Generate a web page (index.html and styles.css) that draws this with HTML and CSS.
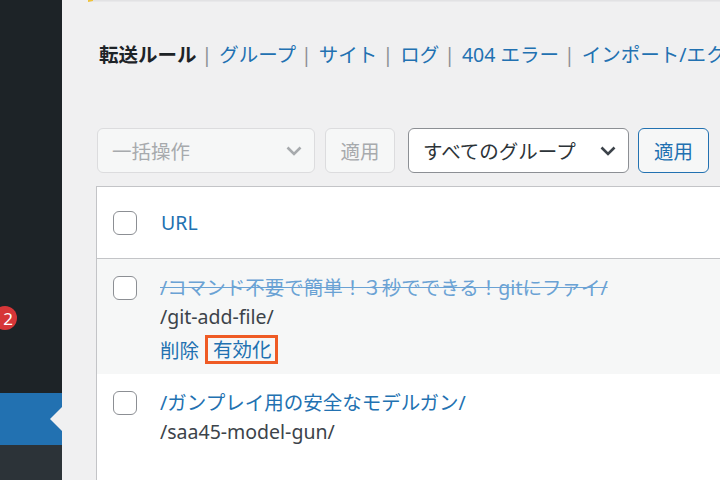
FILE: index.html
```html
<!DOCTYPE html>
<html lang="ja">
<head>
<meta charset="utf-8">
<title>Redirection</title>
<link rel="stylesheet" href="styles.css">
</head>
<body>
<div class="layout">
  <nav class="sidebar">
    <div class="badge-item"><span class="badge">2</span></div>
    <div class="current"><span class="pointer"></span></div>
    <div class="submenu"></div>
  </nav>
  <main class="content">
    <div class="notice"></div>
    <p class="subsubsub"><strong class="here">転送ルール</strong><span class="sep">|</span><a>グループ</a><span class="sep">|</span><a>サイト</a><span class="sep">|</span><a>ログ</a><span class="sep">|</span><a>404 エラー</a><span class="sep">|</span><a>インポート/エクスポート</a><span class="sep">|</span><a>オプション</a></p>
    <div class="tablenav">
      <div class="select bulk"><span>一括操作</span><svg class="chev" width="16" height="10" viewBox="0 0 16 10"><polyline points="1.5,1.5 8,8 14.5,1.5" fill="none" stroke="currentColor" stroke-width="2.6"/></svg></div>
      <div class="button disabled">適用</div>
      <div class="select group"><span>すべてのグループ</span><svg class="chev" width="16" height="10" viewBox="0 0 16 10"><polyline points="1.5,1.5 8,8 14.5,1.5" fill="none" stroke="currentColor" stroke-width="2.6"/></svg></div>
      <div class="button primary">適用</div>
    </div>
    <div class="list">
      <div class="row head">
        <div class="cell-check"><span class="cb"></span></div>
        <div class="cell-title"><a class="col-link">URL</a></div>
      </div>
      <div class="row item alt">
        <div class="cell-check"><span class="cb"></span></div>
        <div class="cell-title">
          <div class="line"><a class="title struck">/コマンド不要で簡単！３秒でできる！gitにファイ/</a></div>
          <div class="line slug">/git-add-file/</div>
          <div class="actions"><a>削除</a><a class="hl">有効化</a></div>
        </div>
      </div>
      <div class="row item">
        <div class="cell-check"><span class="cb"></span></div>
        <div class="cell-title">
          <div class="line"><a class="title">/ガンプレイ用の安全なモデルガン/</a></div>
          <div class="line slug">/saa45-model-gun/</div>
        </div>
      </div>
    </div>
  </main>
</div>
</body>
</html>
```

FILE: styles.css
```css
* { box-sizing: border-box; }
html, body { margin: 0; padding: 0; }
body {
  width: 720px;
  height: 480px;
  overflow: hidden;
  background: #f0f0f1;
  font-family: "Noto Sans", "Noto Sans CJK JP", sans-serif;
  font-size: 19.5px;
  color: #3c434a;
}
a { color: #2271b1; text-decoration: none; }

.layout { display: flex; height: 480px; }

/* sidebar */
.sidebar {
  width: 62px;
  flex: none;
  background: #1d2327;
  display: flex;
  flex-direction: column;
}
.badge-item { margin-top: 306px; height: 24px; }
.badge {
  display: flex;
  align-items: center;
  justify-content: center;
  width: 24px;
  height: 24px;
  margin-left: -7px;
  border-radius: 50%;
  background: #d63638;
  color: #fff;
  font-size: 17px;
  line-height: 1;
  padding-left: 6px;
}
.current {
  margin-top: 63px;
  height: 52px;
  background: #2271b1;
  display: flex;
  justify-content: flex-end;
  align-items: center;
}
.pointer {
  width: 0;
  height: 0;
  border-right: 12px solid #f0f0f1;
  border-top: 12.5px solid transparent;
  border-bottom: 12.5px solid transparent;
}
.submenu { flex: 1; background: #2c3338; }

/* content */
.content {
  flex: 1;
  min-width: 0;
  padding-left: 34px;
  display: flex;
  flex-direction: column;
  align-items: flex-start;
}
.notice {
  margin-left: -8px;
  width: 700px;
  height: 2px;
  flex: none;
  border-left: 5px solid #f0c33c;
  background: #e2e2e4;
  border-bottom: 1px solid #e8e8ea;
}
.subsubsub {
  margin: 38px 0 0;
  padding-left: 3px;
  line-height: 29px;
  white-space: nowrap;
  color: #8c8f94;
}
.here { color: #1d2327; font-weight: 700; }
.sep { margin: 0 7px 0 5px; color: #8c8f94; }

/* tablenav */
.tablenav {
  margin-top: 59px;
  display: flex;
  align-items: center;
  height: 45px;
}
.select {
  height: 45px;
  border: 1px solid #8c8f94;
  border-radius: 6px;
  background: #fff;
  display: flex;
  align-items: center;
  justify-content: space-between;
  padding: 0 12px 0 14px;
  color: #2c3338;
  white-space: nowrap;
}
.select.bulk {
  width: 218px;
  margin-left: 1px;
  margin-right: 10px;
  background: #f6f7f7;
  border-color: #dcdcde;
  color: #a7aaad;
}
.select.group { width: 221px; margin-right: 9px; }
.select.group .chev { color: #3c434a; }
.button {
  height: 45px;
  border: 1px solid #2271b1;
  border-radius: 6px;
  background: #f6f7f7;
  color: #2271b1;
  display: flex;
  align-items: center;
  justify-content: center;
  white-space: nowrap;
}
.button.disabled {
  width: 70px;
  margin-right: 13px;
  border-color: #dcdcde;
  color: #a7aaad;
}
.button.primary { width: 71px; }

/* list table */
.list {
  margin-top: 13px;
  width: 640px;
  border: 1px solid #c3c4c7;
  border-right: none;
  border-bottom: none;
  background: #fff;
  flex: 1;
}
.row { display: flex; }
.row.head {
  height: 72px;
  border-bottom: 1px solid #c3c4c7;
  align-items: center;
}
.row.item { height: 115px; }
.row.alt { background: #f6f7f7; }
.cell-check { width: 63px; flex: none; padding-left: 16px; }
.row.item .cell-check { padding-top: 17px; }
.row.item .cell-title { padding-top: 13.5px; }
.cb {
  display: block;
  width: 24px;
  height: 24px;
  border: 1.5px solid #8c8f94;
  border-radius: 6px;
  background: #fff;
}
.col-link { padding-left: 1px; }
.line { line-height: 29.25px; height: 29.25px; white-space: nowrap; }
.title.struck { color: #6aa2d4; text-decoration: line-through; }
.slug { color: #3c434a; }
.actions {
  margin-top: 4px;
  height: 29px;
  display: flex;
  align-items: center;
  white-space: nowrap;
}
.hl {
  margin-left: 6px;
  height: 29px;
  line-height: 23px;
  border: 3px solid #ef5b25;
  padding: 0 3px 0 5px;
}
```
